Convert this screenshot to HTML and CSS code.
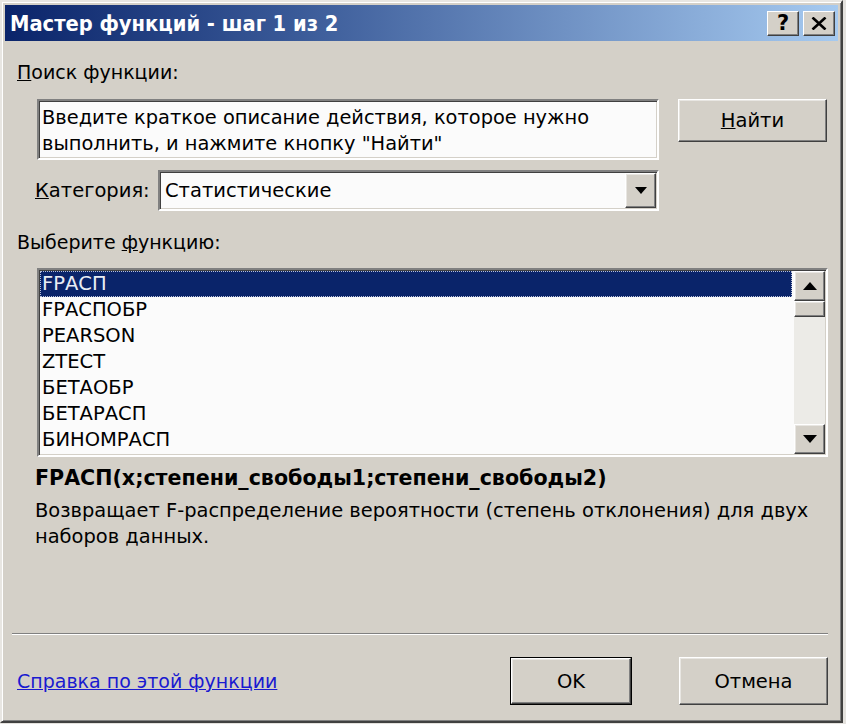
FILE: index.html
```html
<!DOCTYPE html>
<html lang="ru">
<head>
<meta charset="utf-8">
<title>Мастер функций</title>
<link rel="stylesheet" href="styles.css">
</head>
<body>
<div class="window">
  <div class="titlebar">
    <span class="title">Мастер функций - шаг 1 из 2</span>
    <div class="tb-buttons">
      <div class="tb-btn help">?</div>
      <div class="tb-btn close">
        <svg width="16" height="13" viewBox="0 0 16 13"><path d="M1.5 0.5 L14.5 12.5 M14.5 0.5 L1.5 12.5" stroke="#000" stroke-width="2.6" fill="none"/></svg>
      </div>
    </div>
  </div>
  <div class="content">
    <div class="label lbl-search"><u>П</u>оиск функции:</div>
    <div class="search-row">
      <div class="field search">Введите краткое описание действия, которое нужно<br>выполнить, и нажмите кнопку "Найти"</div>
      <div class="btn find"><span><u>Н</u>айти</span></div>
    </div>
    <div class="cat-row">
      <span class="label cat-label"><u>К</u>атегория:</span>
      <div class="field combo">
        <span class="combo-text">Статистические</span>
        <div class="btn drop">
          <svg width="12" height="7" viewBox="0 0 12 7"><path d="M0 0 H12 L6 7 Z" fill="#000"/></svg>
        </div>
      </div>
    </div>
    <div class="label lbl-choose">Выберите <u>ф</u>ункцию:</div>
    <div class="field listbox">
      <ul class="items">
        <li class="item selected">FРАСП</li>
        <li class="item">FРАСПОБР</li>
        <li class="item">PEARSON</li>
        <li class="item">ZTECT</li>
        <li class="item">БЕТАОБР</li>
        <li class="item">БЕТАРАСП</li>
        <li class="item">БИНОМРАСП</li>
      </ul>
      <div class="scrollbar">
        <div class="btn sb-btn up">
          <svg width="14" height="8" viewBox="0 0 14 8"><path d="M0 8 H14 L7 0 Z" fill="#000"/></svg>
        </div>
        <div class="btn thumb"></div>
        <div class="track"></div>
        <div class="btn sb-btn down">
          <svg width="14" height="8" viewBox="0 0 14 8"><path d="M0 0 H14 L7 8 Z" fill="#000"/></svg>
        </div>
      </div>
    </div>
    <div class="signature">FРАСП(x;степени_свободы1;степени_свободы2)</div>
    <div class="desc">Возвращает F-распределение вероятности (степень отклонения) для двух<br>наборов данных.</div>
    <div class="separator"></div>
    <div class="bottom-row">
      <a class="help-link" href="#">Справка по этой функции</a>
      <div class="default-frame"><div class="btn ok"><span>OK</span></div></div>
      <div class="btn cancel"><span>Отмена</span></div>
    </div>
  </div>
</div>
</body>
</html>
```
FILE: styles.css
```css
* { box-sizing: border-box; }
html, body { margin: 0; padding: 0; }
body {
  width: 846px;
  height: 724px;
  background: #e4e2de;
  font-family: "DejaVu Sans", "Noto Sans", sans-serif;
  color: #000;
  overflow: hidden;
}
.window {
  width: 843px;
  height: 723px;
  background: #d4d0c8;
  border: 2px solid;
  border-color: #e8e6e2 #404040 #404040 #e8e6e2;
  box-shadow: inset 1px 1px #fff, inset -1px -1px #808080;
  padding: 3px;
  display: flex;
  flex-direction: column;
}
.titlebar {
  height: 36px;
  flex: none;
  background: linear-gradient(to right, #0a246a 0%, #3a5a98 35%, #a6caf0 100%);
  display: flex;
  align-items: center;
  padding-left: 5px;
  padding-right: 3px;
}
.title {
  flex: 1;
  color: #fff;
  font-family: "DejaVu Sans Condensed", "DejaVu Sans", sans-serif;
  font-weight: bold;
  font-size: 21.7px;
  white-space: nowrap;
}
.tb-buttons { display: flex; gap: 4px; }
.tb-btn {
  width: 32px;
  height: 25px;
  background: #d4d0c8;
  border: 1px solid;
  border-color: #fff #404040 #404040 #fff;
  box-shadow: inset -1px -1px #808080;
  display: flex;
  align-items: center;
  justify-content: center;
  font-weight: bold;
  font-size: 21px;
}
.content {
  flex: 1;
  padding: 0 10px 0 12px;
  display: flex;
  flex-direction: column;
}
.label { font-size: 19px; line-height: 22px; white-space: nowrap; }
.lbl-search { margin-top: 20px; }
.field {
  background: #fbfbfb;
  border: 2px solid;
  border-color: #808080 #fff #fff #808080;
  box-shadow: inset 1px 1px #404040, inset -1px -1px #d4d0c8;
}
.btn {
  background: #d4d0c8;
  border: 1px solid;
  border-color: #fff #404040 #404040 #fff;
  box-shadow: inset -1px -1px #808080, inset 1px 1px #e8e6e2;
  display: flex;
  align-items: center;
  justify-content: center;
}
.search-row {
  margin-top: 16px;
  margin-left: 20px;
  display: flex;
  align-items: flex-start;
}
.search {
  width: 622px;
  height: 61px;
  padding: 4px 3px;
  font-size: 19.4px;
  line-height: 26px;
  white-space: nowrap;
}
.find {
  margin-left: 19px;
  width: 149px;
  height: 43px;
  font-size: 19.5px;
}
.cat-row {
  margin-top: 10px;
  display: flex;
  align-items: center;
}
.cat-label { margin-left: 18px; width: 123px; font-size: 19.5px; }
.combo {
  width: 501px;
  height: 41px;
  padding: 1px;
  display: flex;
  align-items: stretch;
}
.combo-text {
  flex: 1;
  padding-left: 4px;
  font-size: 19.5px;
  display: flex;
  align-items: center;
}
.drop { width: 31px; }
.lbl-choose { margin-top: 20px; }
.listbox {
  margin-top: 15px;
  margin-left: 20px;
  width: 791px;
  height: 189px;
  display: flex;
  padding-right: 1px;
}
.items {
  list-style: none;
  margin: 0;
  padding: 1px 2px 0 1px;
  flex: 1;
}
.item {
  height: 26px;
  line-height: 26px;
  padding-left: 2px;
  font-size: 19.5px;
  white-space: nowrap;
}
.item.selected {
  background: #0a246a;
  color: #e8ecf4;
  outline: 1px dotted #b8c0d8;
  outline-offset: -1px;
}
.scrollbar {
  width: 31px;
  display: flex;
  flex-direction: column;
  padding: 1px 0;
}
.sb-btn { height: 30px; flex: none; }
.thumb { height: 16px; flex: none; }
.track { flex: 1; background: #ecebe7; }
.signature {
  margin-top: 10px;
  margin-left: 18px;
  font-weight: bold;
  font-size: 20.6px;
  line-height: 22px;
  white-space: nowrap;
}
.desc {
  margin-top: 9px;
  margin-left: 18px;
  font-size: 19.45px;
  line-height: 26px;
  white-space: nowrap;
}
.separator {
  margin-top: 83px;
  margin-left: -5px;
  height: 2px;
  border-top: 1px solid #808080;
  border-bottom: 1px solid #fff;
}
.bottom-row {
  margin-top: 22px;
  display: flex;
  align-items: center;
}
.help-link {
  flex: 1;
  color: #1a1ad0;
  font-size: 19px;
  text-decoration: underline;
}
.default-frame {
  width: 122px;
  height: 48px;
  border: 1px solid #000;
  display: flex;
}
.ok { flex: 1; font-size: 19.5px; }
.cancel {
  margin-left: 47px;
  width: 149px;
  height: 48px;
  font-size: 19.5px;
}
```
